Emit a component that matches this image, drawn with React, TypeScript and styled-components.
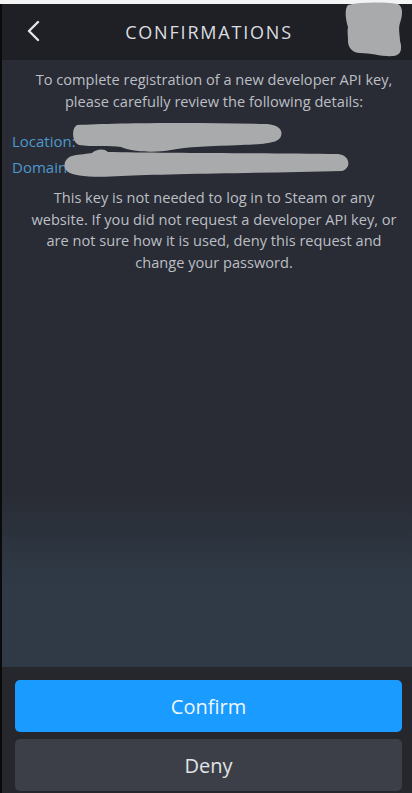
import React from "react";
import styled, { createGlobalStyle } from "styled-components";

const Global = createGlobalStyle`
  html, body { margin: 0; padding: 0; background: #000; }
  body { font-family: "Open Sans", "Noto Sans", sans-serif; }
  * { box-sizing: border-box; }
`;

const Page = styled.div`
  position: relative;
  width: 412px;
  height: 793px;
  display: flex;
  flex-direction: column;
  overflow: hidden;
`;

const TopStrip = styled.div`
  height: 4px;
  background: #f4f4f4;
  flex: none;
`;

const Body = styled.div`
  flex: 1;
  display: flex;
  min-height: 0;
`;

const Edge = styled.div`
  width: 2px;
  background: #0a0a0b;
  flex: none;
`;

const Screen = styled.div`
  flex: 1;
  display: flex;
  flex-direction: column;
  min-width: 0;
`;

const Header = styled.header`
  height: 56px;
  flex: none;
  background: #1e2025;
  display: grid;
  grid-template-columns: 1fr auto 1fr;
  align-items: center;
  padding: 0 24px;
`;

const BackButton = styled.div`
  width: 16px;
  height: 22px;
  display: flex;
  align-items: center;
  justify-content: center;
`;

const Title = styled.h1`
  margin: 0;
  font-size: 18px;
  font-weight: 400;
  letter-spacing: 1.8px;
  color: #dcdde0;
  padding-left: 4px;
`;

const Content = styled.main`
  flex: 1;
  background: linear-gradient(
    to bottom,
    #292c35 0%,
    #292c35 72%,
    #2f3a46 86%,
    #2f3a46 100%
  );
  padding-top: 8px;
  display: flex;
  flex-direction: column;
`;

const Paragraph = styled.p<{ $lh: number; $mt?: number }>`
  margin: ${(p) => p.$mt ?? 0}px 0 0 0;
  font-size: 14.6px;
  line-height: ${(p) => p.$lh}px;
  color: #bcbfc4;
  text-align: center;
  padding-left: 14px;
`;

const Details = styled.div`
  margin-top: 18px;
  display: flex;
  flex-direction: column;
  gap: 4px;
  padding-left: 10px;
`;

const DetailRow = styled.div`
  position: relative;
  height: 22px;
  line-height: 22px;
  font-size: 15px;
  color: #4f98cc;
`;

const Redaction = styled.svg<{ $left: number; $top: number }>`
  position: absolute;
  left: ${(p) => p.$left}px;
  top: ${(p) => p.$top}px;
`;

const AvatarRedaction = styled.svg`
  position: absolute;
  left: 342px;
  top: 1px;
`;

const Footer = styled.footer`
  height: 126px;
  flex: none;
  background: #25272d;
  padding: 13px 10px 2px 13px;
  display: flex;
  flex-direction: column;
  gap: 7px;
`;

const ActionButton = styled.button<{ $primary?: boolean }>`
  height: 52px;
  border: none;
  border-radius: 5px;
  background: ${(p) => (p.$primary ? "#1a9bff" : "#3c3f48")};
  color: ${(p) => (p.$primary ? "#eef6ff" : "#e2e3e6")};
  font-family: "Open Sans", "Noto Sans", sans-serif;
  font-size: 20px;
  font-weight: 400;
  display: flex;
  align-items: center;
  justify-content: center;
  padding: 0;
`;

export default function App() {
  return (
    <>
      <Global />
      <Page>
        <TopStrip />
        <Body>
          <Edge />
          <Screen>
            <Header>
              <BackButton>
                <svg width="14" height="22" viewBox="0 0 14 22">
                  <polyline
                    points="11,1 2,10 11,19"
                    fill="none"
                    stroke="#e4e4e6"
                    strokeWidth="2.4"
                    strokeLinecap="round"
                    strokeLinejoin="round"
                  />
                </svg>
              </BackButton>
              <Title>CONFIRMATIONS</Title>
              <div />
            </Header>
            <Content>
              <Paragraph $lh={22}>
                To complete registration of a new developer API key,
                <br />
                please carefully review the following details:
              </Paragraph>
              <Details>
                <DetailRow>
                  Location:
                  <Redaction $left={59} $top={-8} width="214" height="32" viewBox="0 0 214 32">
                    <path
                      d="M6 3 C40 1 120 0 196 2 C208 3 212 8 210 14 C208 20 200 22 170 23 C140 24 115 25 100 28 C85 31 60 30 50 25 C40 23 20 25 8 23 C1 21 0 6 6 3 Z"
                      fill="#a9aaac"
                    />
                  </Redaction>
                </DetailRow>
                <DetailRow>
                  Domain
                  <Redaction $left={50} $top={-8} width="292" height="30" viewBox="0 0 292 30">
                    <path
                      d="M10 8 C18 6 26 6 30 5 C34 1 42 0 46 4 C90 5 200 5 276 6 C288 7 290 20 280 23 C200 25 100 26 60 28 C30 30 12 28 6 24 C0 20 2 10 10 8 Z"
                      fill="#a9aaac"
                    />
                  </Redaction>
                </DetailRow>
              </Details>
              <Paragraph $lh={21.7} $mt={9}>
                This key is not needed to log in to Steam or any
                <br />
                website. If you did not request a developer API key, or
                <br />
                are not sure how it is used, deny this request and
                <br />
                change your password.
              </Paragraph>
            </Content>
            <Footer>
              <ActionButton $primary>Confirm</ActionButton>
              <ActionButton>Deny</ActionButton>
            </Footer>
          </Screen>
        </Body>
        <AvatarRedaction width="62" height="58" viewBox="0 0 62 58">
          <path
            d="M6 4 C20 1 40 1 56 3 C62 6 60 16 58 22 C56 28 58 34 58 40 C60 46 60 54 52 55 C40 56 30 52 18 52 C10 52 6 46 6 40 C6 34 5 30 6 26 C4 20 2 8 6 4 Z"
            fill="#a9aaac"
          />
        </AvatarRedaction>
      </Page>
    </>
  );
}
